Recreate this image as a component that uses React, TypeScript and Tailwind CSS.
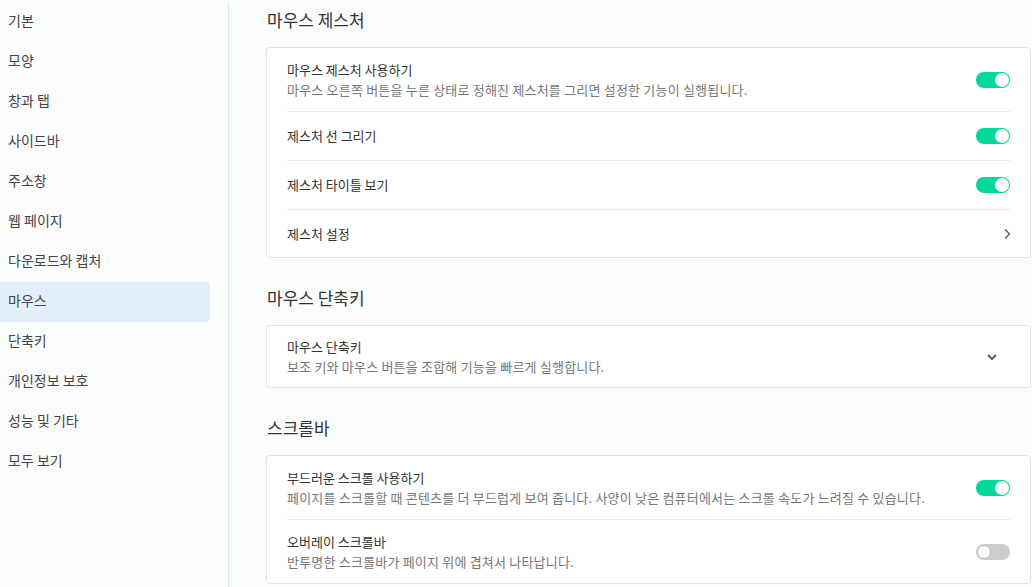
import React from 'react';

const navItems = ['기본', '모양', '창과 탭', '사이드바', '주소창', '웹 페이지', '다운로드와 캡처', '마우스', '단축키', '개인정보 보호', '성능 및 기타', '모두 보기'];

const Toggle: React.FC<{ on?: boolean }> = ({ on }) => (
  <div className={`w-[34px] h-4 rounded-full flex items-center px-px ${on ? 'bg-[#00d79a] justify-end' : 'bg-[#cccccc] justify-start'}`}>
    <div className={`w-[14px] h-[14px] rounded-full bg-white ${on ? '' : 'border border-[#bbbbbb]'}`} />
  </div>
);

const ChevronRight = () => (
  <svg width="10" height="12" viewBox="0 0 10 12" fill="none" stroke="#555" strokeWidth="1.3" className="mr-[-2px]">
    <path d="M3 1.5 L7.5 6 L3 10.5" />
  </svg>
);

const ChevronDown = () => (
  <svg width="12" height="8" viewBox="0 0 12 8" fill="none" stroke="#555" strokeWidth="1.8">
    <path d="M2 2 L6 6 L10 2" />
  </svg>
);

const Row: React.FC<{ title: string; desc?: string; right: React.ReactNode; last?: boolean }> = ({ title, desc, right, last }) => {
  const h = desc ? (last ? 'h-[63px]' : 'h-[64px]') : last ? 'h-[47px]' : 'h-[49px]';
  return (
    <div className={`mx-5 flex items-center justify-between ${last ? '' : 'border-b border-[#ececec]'} ${h}`}>
      <div className="flex flex-col">
        <span className="text-[13px] leading-5 text-[#333]">{title}</span>
        {desc && <span className="text-[13px] tracking-[0.2px] leading-5 text-[#777]">{desc}</span>}
      </div>
      {right}
    </div>
  );
};

const Section: React.FC<{ title: string; children: React.ReactNode }> = ({ title, children }) => (
  <section className="flex flex-col">
    <h2 className="h-6 leading-6 text-[17px] text-[#333] pl-px mb-[15px]">{title}</h2>
    <div className="bg-white border border-[#dfe4ea] rounded">{children}</div>
  </section>
);

export default function App() {
  return (
    <div className="w-[1032px] h-[587px] overflow-hidden flex bg-[#fafcfc]" style={{ fontFamily: '"Noto Sans CJK KR", "Noto Sans", sans-serif' }}>
      <aside className="w-[229px] shrink-0 pt-[2px] flex">
        <nav className="w-[228px] flex flex-col">
          {navItems.map((n) => (
            <div
              key={n}
              className={`h-10 w-[210px] flex items-center pl-2 pb-[3px] text-[14px] text-[#444] rounded-r ${n === '마우스' ? 'bg-[#e3eefa] text-[#222]' : ''}`}
            >
              {n}
            </div>
          ))}
        </nav>
        <div className="w-px mt-[1px] bg-[#dde4ec]" />
      </aside>
      <main className="flex-1 pl-[37px] pr-[1px] pt-2 flex flex-col gap-[28px]">
        <Section title="마우스 제스처">
          <Row title="마우스 제스처 사용하기" desc="마우스 오른쪽 버튼을 누른 상태로 정해진 제스처를 그리면 설정한 기능이 실행됩니다." right={<Toggle on />} />
          <Row title="제스처 선 그리기" right={<Toggle on />} />
          <Row title="제스처 타이틀 보기" right={<Toggle on />} />
          <Row title="제스처 설정" right={<ChevronRight />} last />
        </Section>
        <Section title="마우스 단축키">
          <div className="h-[61px] pl-5 pr-[32px] flex items-center justify-between">
            <div className="flex flex-col">
              <span className="text-[13px] leading-5 text-[#333]">마우스 단축키</span>
              <span className="text-[13px] tracking-[0.2px] leading-5 text-[#777]">보조 키와 마우스 버튼을 조합해 기능을 빠르게 실행합니다.</span>
            </div>
            <ChevronDown />
          </div>
        </Section>
        <Section title="스크롤바">
          <Row title="부드러운 스크롤 사용하기" desc="페이지를 스크롤할 때 콘텐츠를 더 부드럽게 보여 줍니다. 사양이 낮은 컴퓨터에서는 스크롤 속도가 느려질 수 있습니다." right={<Toggle on />} />
          <Row title="오버레이 스크롤바" desc="반투명한 스크롤바가 페이지 위에 겹쳐서 나타납니다." right={<Toggle />} last />
        </Section>
      </main>
    </div>
  );
}
